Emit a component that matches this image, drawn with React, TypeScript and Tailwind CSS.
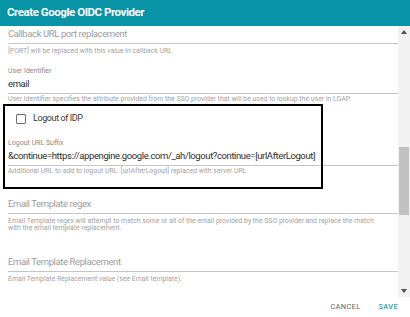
const font = { fontFamily: 'Roboto, "Liberation Sans", sans-serif' };

interface FieldProps {
  label?: string;
  value?: string;
  placeholder?: string;
  helper?: string[];
  className?: string;
  helperClass?: string;
}

const Field = ({ label, value, placeholder, helper = [], className = '', helperClass = 'mt-[3px]' }: FieldProps) => (
  <div className={className}>
    {label && <div className="h-[9px] text-[7px] leading-[9px] text-[#8a8a8a]">{label}</div>}
    <div className="flex h-[18px] items-center border-b border-[#c6c6c6] pr-[13px]">
      <span
        className={`whitespace-nowrap text-[9.5px] tracking-[-0.4px] ${value ? 'text-[#2e2e2e]' : 'text-[#9d9d9d]'}`}
      >
        {value || placeholder}
      </span>
    </div>
    <div className={helperClass}>
      {helper.map((line) => (
        <div key={line} className="h-[7px] whitespace-nowrap text-[6.9px] leading-[7px] text-[#a3a3a3]">
          {line}
        </div>
      ))}
    </div>
  </div>
);

export default function App() {
  return (
    <div className="relative flex h-[317px] w-[410px] flex-col overflow-hidden bg-white" style={font}>
      <div className="flex h-[26px] shrink-0 items-center bg-[#0893a7] px-[7px]">
        <h1 className="text-[11.5px] font-bold tracking-[-0.45px] text-white">Create Google OIDC Provider</h1>
      </div>

      <div className="flex min-h-0 flex-1">
        <div className="flex-1 overflow-hidden pl-[8px]">
          <Field
            placeholder="Callback URL port replacement"
            helperClass="mt-[4px]"
            helper={['[PORT] will be replaced with this value in callback URL']}
          />
          <Field
            className="mt-[12px]"
            label="User Identifier"
            value="email"
            helperClass="mt-[2px]"
            helper={['User Identifier specifies the attribute provided from the SSO provider that will be used to lookup the user in LDAP.']}
          />

          <div className="mt-[6px] flex h-[20px] items-center pl-[8px]">
            <span className="h-[10px] w-[10px] rounded-[1px] border-[1.5px] border-[#6e6e6e]" />
            <span className="ml-[7px] text-[9px] tracking-[-0.4px] text-[#3a3a3a]">Logout of IDP</span>
          </div>

          <Field
            className="mt-[10px]"
            label="Logout URL Suffix"
            value="&continue=https://appengine.google.com/_ah/logout?continue=[urlAfterLogout]"
            helperClass="mt-[2px]"
            helper={['Additional URL to add to logout URL. [urlAfterLogout] replaced with server URL']}
          />

          <Field
            className="mt-[21px]"
            placeholder="Email Template regex"
            helperClass="mt-[4px]"
            helper={[
              'Email Template regex will attempt to match some or all of the email provided by the SSO provider and replace the match',
              'with the email template replacement.',
            ]}
          />

          <Field
            className="mt-[22px]"
            placeholder="Email Template Replacement"
            helperClass="mt-[4px]"
            helper={['Email Template Replacement value (see Email template).']}
          />
        </div>

        <div className="flex w-[12px] shrink-0 flex-col bg-[#f1f1f1]">
          <div className="flex h-[12px] items-center justify-center">
            <svg width="6" height="4" viewBox="0 0 6 4"><path d="M3 0L6 4H0z" fill="#505050" /></svg>
          </div>
          <div className="mx-[1px] mt-[109px] h-[68px] bg-[#c1c1c1]" />
          <div className="flex-1" />
          <div className="flex h-[12px] items-center justify-center">
            <svg width="6" height="4" viewBox="0 0 6 4"><path d="M0 0H6L3 4z" fill="#505050" /></svg>
          </div>
        </div>
      </div>

      <div className="flex h-[20px] shrink-0 items-center justify-end gap-[18px] pr-[12px]">
        <button className="text-[7.5px] tracking-[0.3px] text-[#666]">CANCEL</button>
        <button className="text-[7.5px] font-medium tracking-[0.3px] text-[#2aa6b9]">SAVE</button>
      </div>

      <div className="pointer-events-none absolute left-[3px] top-[104px] h-[85px] w-[320px] border-2 border-black" />
    </div>
  );
}
